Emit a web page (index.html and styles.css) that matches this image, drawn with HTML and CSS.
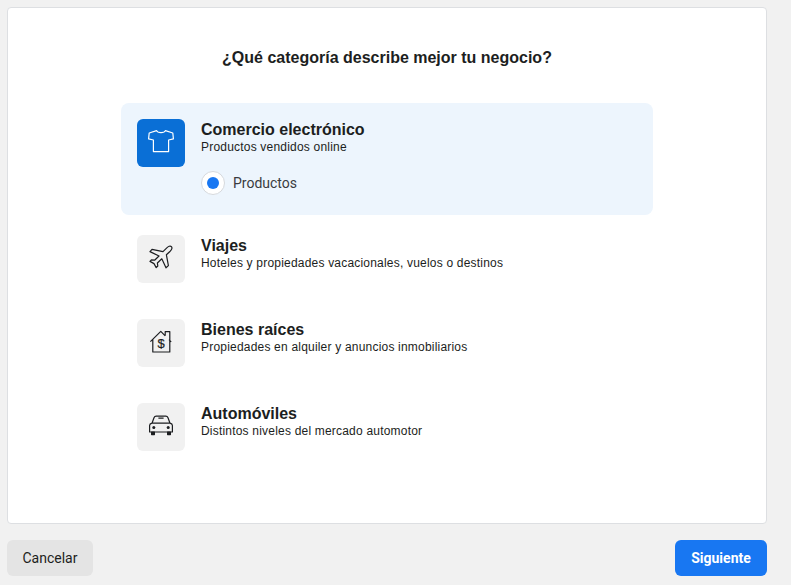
FILE: index.html
```html
<!DOCTYPE html>
<html lang="es">
<head>
<meta charset="utf-8">
<title>Categoría</title>
<link rel="stylesheet" href="styles.css">
</head>
<body>
<main class="page">
  <section class="card">
    <h1 class="title">¿Qué categoría describe mejor tu negocio?</h1>
    <div class="list">
      <div class="option selected">
        <div class="icon icon-active">
          <svg width="28" height="28" viewBox="0 0 28 28" fill="none" stroke="#fff" stroke-width="1.2" stroke-linejoin="round"><path d="M9.6 1.6 L2.2 4 L1.6 9.8 L6.4 11 L6.4 22.6 L21.6 22.6 L21.6 11 L26.4 9.8 L25.8 4 L18.4 1.6 C17.4 4.4 10.6 4.4 9.6 1.6 Z"/></svg>
        </div>
        <div class="text">
          <div class="name">Comercio electrónico</div>
          <div class="desc">Productos vendidos online</div>
          <label class="radio-row">
            <span class="radio"><span class="dot"></span></span>
            <span class="radio-label">Productos</span>
          </label>
        </div>
      </div>
      <div class="option">
        <div class="icon">
          <svg width="28" height="28" viewBox="0 0 28 28" fill="none" stroke="#1c1e21" stroke-width="1.2" stroke-linejoin="round"><path d="M24.4 1.6 C25.6 2.8 24.6 4.8 23.2 6.2 L19.4 9.8 L21.4 20.6 L19 22.8 L14.8 13.8 L10.4 18 L10.8 21 L9.2 22.6 L7 18.6 L3 16.4 L4.4 14.8 L7.6 15.2 L12 11 L3 6.6 L5 4.4 L16 6.6 L19.8 2.8 C21.2 1.4 23.2 0.4 24.4 1.6 Z"/></svg>
        </div>
        <div class="text">
          <div class="name">Viajes</div>
          <div class="desc">Hoteles y propiedades vacacionales, vuelos o destinos</div>
        </div>
      </div>
      <div class="option">
        <div class="icon">
          <svg width="28" height="28" viewBox="0 0 28 28" fill="none" stroke="#1c1e21" stroke-width="1.2" stroke-linejoin="round"><path d="M3.4 12.6 L13.8 2.4 L18.2 6.8 M22 10.6 L24.2 12.8 M5.8 10.6 L5.8 23 L22.8 23 L22.8 2.6 L18.2 2.6 L18.2 6.8"/><text x="14" y="19.4" class="dollar">$</text></svg>
        </div>
        <div class="text">
          <div class="name">Bienes raíces</div>
          <div class="desc">Propiedades en alquiler y anuncios inmobiliarios</div>
        </div>
      </div>
      <div class="option">
        <div class="icon">
          <svg width="28" height="28" viewBox="0 0 28 28" fill="none" stroke="#1c1e21" stroke-width="1.2" stroke-linejoin="round"><path d="M2.6 12.6 C2.6 11.4 3.4 10.6 5 10.2 L7 4.8 C7.4 3.8 8.2 3.2 9.2 3.2 L18.8 3.2 C19.8 3.2 20.6 3.8 21 4.8 L23 10.2 C24.6 10.6 25.4 11.4 25.4 12.6 L25.4 19 L2.6 19 Z M5 10.2 L23 10.2 M11.4 5.2 L16.6 5.2"/><path d="M4.6 19 L4.6 21.6 L7.4 21.6 L7.4 19 Z M20.6 19 L20.6 21.6 L23.4 21.6 L23.4 19 Z" fill="#1c1e21"/><circle cx="6.8" cy="14.4" r="1.5" fill="#1c1e21" stroke="none"/><circle cx="21.2" cy="14.4" r="1.5" fill="#1c1e21" stroke="none"/></svg>
        </div>
        <div class="text">
          <div class="name">Automóviles</div>
          <div class="desc">Distintos niveles del mercado automotor</div>
        </div>
      </div>
    </div>
  </section>
  <footer class="actions">
    <button class="btn btn-cancel" type="button">Cancelar</button>
    <button class="btn btn-next" type="button">Siguiente</button>
  </footer>
</main>
</body>
</html>
```
FILE: styles.css
```css
html, body {
  margin: 0;
  padding: 0;
  height: 100%;
  background: #f1f1f1;
}
body {
  font-family: "Liberation Sans", Arial, sans-serif;
  color: #1c1e21;
  overflow: hidden;
}
.page {
  width: 760px;
  height: 585px;
  margin-left: 7px;
  padding-top: 7px;
  box-sizing: border-box;
  display: flex;
  flex-direction: column;
}
.card {
  height: 517px;
  box-sizing: border-box;
  background: #fff;
  border: 1px solid #dddfe2;
  border-radius: 4px;
  padding-top: 40px;
}
.title {
  margin: 0;
  font-size: 16px;
  line-height: 20px;
  font-weight: 700;
  text-align: center;
  color: #1c1e21;
}
.list {
  margin: 35px 0 0 113px;
  width: 532px;
  display: flex;
  flex-direction: column;
  gap: 4px;
}
.option {
  display: flex;
  gap: 16px;
  padding: 16px;
  border-radius: 8px;
  min-height: 48px;
}
.selected {
  background: #edf5fd;
  padding-bottom: 20px;
}
.icon {
  width: 48px;
  height: 48px;
  flex: none;
  border-radius: 6px;
  background: #f1f1f1;
  display: flex;
  align-items: center;
  justify-content: center;
}
.icon-active {
  background: #0a6fd6;
}
.text {
  display: flex;
  flex-direction: column;
}
.name {
  font-size: 16px;
  line-height: 20px;
  font-weight: 700;
  padding-top: 1px;
}
.desc {
  font-size: 12px;
  line-height: 14px;
  font-family: "Liberation Sans", Arial, sans-serif;
  letter-spacing: 0.2px;
}
.radio-row {
  display: flex;
  align-items: center;
  gap: 8px;
  margin-top: 17px;
}
.radio {
  width: 24px;
  height: 24px;
  box-sizing: border-box;
  border: 1px solid #d6d9dd;
  border-radius: 50%;
  background: #fff;
  display: flex;
  align-items: center;
  justify-content: center;
}
.dot {
  width: 12px;
  height: 12px;
  border-radius: 50%;
  background: #1877f2;
}
.radio-label {
  font-family: Roboto, "Liberation Sans", sans-serif;
  font-size: 14px;
  color: #3a3b3f;
}
.dollar {
  font-family: "Liberation Sans", Arial, sans-serif;
  font-size: 13px;
  fill: #1c1e21;
  stroke: #1c1e21;
  stroke-width: 0.2;
  text-anchor: middle;
}
.actions {
  display: flex;
  justify-content: space-between;
  margin-top: 16px;
}
.btn {
  height: 36px;
  border: 0;
  border-radius: 6px;
  font-family: Roboto, "Liberation Sans", sans-serif;
  font-size: 14px;
  padding: 0;
}
.btn-cancel {
  width: 86px;
  background: #e4e4e4;
  color: #1c1e21;
}
.btn-next {
  width: 92px;
  background: #1877f2;
  color: #fff;
  font-weight: 700;
}
```
